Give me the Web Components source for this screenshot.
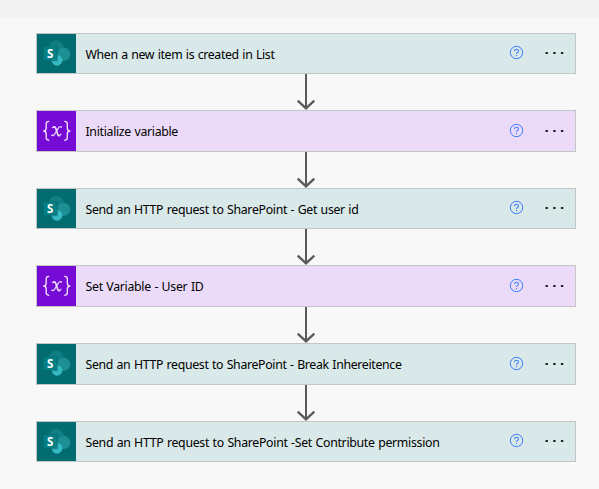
<!DOCTYPE html>
<html lang="en"><head><meta charset="utf-8"><title>Flow</title>
<style>html,body{margin:0;height:100%;background:#f8f8f8;overflow:hidden}</style></head><body>
<flow-canvas>
<flow-card kind="sharepoint" h="41" w="189">When a new item is created in List</flow-card><flow-arrow h="36"></flow-arrow>
<flow-card kind="variable" h="42" w="92.5">Initialize variable</flow-card><flow-arrow h="36"></flow-arrow>
<flow-card kind="sharepoint" h="41" w="273">Send an HTTP request to SharePoint - Get user id</flow-card><flow-arrow h="36"></flow-arrow>
<flow-card kind="variable" h="42" w="118">Set Variable - User ID</flow-card><flow-arrow h="36"></flow-arrow>
<flow-card kind="sharepoint" h="42" w="316">Send an HTTP request to SharePoint - Break Inhereitence</flow-card><flow-arrow h="36"></flow-arrow>
<flow-card kind="sharepoint" h="41" w="354">Send an HTTP request to SharePoint -Set Contribute permission</flow-card>
</flow-canvas>
<script>
class FlowCanvas extends HTMLElement{
 connectedCallback(){
  this.attachShadow({mode:'open'}).innerHTML=`<style>:host{display:block}
  header{height:18px;background:#f3f3f3}
  main{display:flex;flex-direction:column;width:540px;margin:15px 0 0 36px}</style><header></header><main><slot></slot></main>`;
 }}
class FlowArrow extends HTMLElement{
 connectedCallback(){
  const h=+this.getAttribute('h');
  this.attachShadow({mode:'open'}).innerHTML=`<style>:host{display:block;height:${h}px}svg{display:block;margin-left:260px}</style>
  <svg width="20" height="${h}" fill="none" stroke="#5a5a5a"><path stroke-width="2" d="M10 0V${h-1}"/><path stroke-width="2.3" d="M1.7 ${h-9.3}L10 ${h-1.6}L18.3 ${h-9.3}"/></svg>`;
 }}
const icons={
 sharepoint:`<svg width="39" height="40" viewBox="0 0 39 40"><rect width="39" height="40" fill="#036c70"/>
 <circle cx="19.3" cy="14.3" r="7.6" fill="#0f7f84"/><circle cx="26.7" cy="20.4" r="6.6" fill="#1b8f93"/>
 <circle cx="20" cy="26.3" r="5.4" fill="#35bac4"/><path d="M12 12.5H20.8V27.3H14Z" fill="#03585c" opacity=".5"/>
 <rect x="6.8" y="13" width="13" height="13" rx=".6" fill="#057f84"/>
 <text x="13.2" y="23.6" text-anchor="middle" font-family="Open Sans,sans-serif" font-weight="700" font-size="11.5" fill="#fff">S</text></svg>`,
 variable:`<svg width="39" height="40" viewBox="0 0 39 40"><rect width="39" height="40" fill="#770bd6"/>
 <g fill="none" stroke="#eddbfa" stroke-width="1.4" stroke-linecap="round" stroke-linejoin="round">
 <path d="M11.7 10.4Q9.2 10.4 9.2 13V17Q9.2 19.8 6.7 20Q9.2 20.2 9.2 23V26.6Q9.2 29.2 11.7 29.2M27.8 10.4Q30.3 10.4 30.3 13V17Q30.3 19.8 32.8 20Q30.3 20.2 30.3 23V26.6Q30.3 29.2 27.8 29.2"/>
 <path stroke-width="1.7" d="M16.6 16Q18.2 15.6 18.9 17.8L20.6 23Q21.2 25 22.3 24.6"/><path stroke-width="1.1" d="M15.3 16.7L16.6 16M22.3 24.6Q23.3 24.2 24 23.1M24.4 16Q22.6 14.9 21 17.6L18 22.6Q16.4 25.4 14.9 24.4"/><path d="M24.2 16.1h.2M15 24.3h.2"/></g></svg>`};
class FlowCard extends HTMLElement{
 connectedCallback(){
  const k=this.getAttribute('kind'),h=+this.getAttribute('h');
  this.attachShadow({mode:'open'}).innerHTML=`<style>
  :host{display:flex;box-sizing:border-box;height:${h}px;border:1px solid #c4c6c6;background:${k=='variable'?'#ebdbf8':'#d9e8e8'};align-items:center;font:12.3px "Noto Sans",sans-serif;color:#000}
  .icon{width:39px;height:${h-2}px;overflow:hidden;background:${k=='variable'?'#770bd6':'#036c70'}}
  svg{display:block}.label{margin-left:9.5px;white-space:pre;line-height:18px;padding-top:${h==42?1:3}px}
  .help{margin:0 21px 2px auto}.more{margin:0 10px 1px 0}</style>
  <div class="icon">${icons[k]}</div><span class="label"><slot></slot></span>
  <svg class="help" width="15" height="15" viewBox="-.5 -.5 15 15" fill="none" stroke="#3b7cff"><circle cx="7" cy="7" r="6.2"/><path d="M5 5.6Q5.1 3.8 7 3.8T9 5.5C9 6.8 7 7 7 8.5M7 9.6V10.7" stroke-width="1.05"/></svg>
  <svg class="more" width="20" height="4" fill="#222"><path d="M.5 1h2.4v2H.5zM8.2 1h2.4v2H8.2zM15.9 1h2.4v2h-2.4z"/></svg>`;
  const l=this.shadowRoot.querySelector('.label'),n=this.textContent.length;
  l.style.wordSpacing='.6px';
  l.style.letterSpacing=(+this.getAttribute('w')-l.getBoundingClientRect().width)/n+'px';
 }}
customElements.define('flow-canvas',FlowCanvas);customElements.define('flow-arrow',FlowArrow);customElements.define('flow-card',FlowCard);
</script></body></html>
